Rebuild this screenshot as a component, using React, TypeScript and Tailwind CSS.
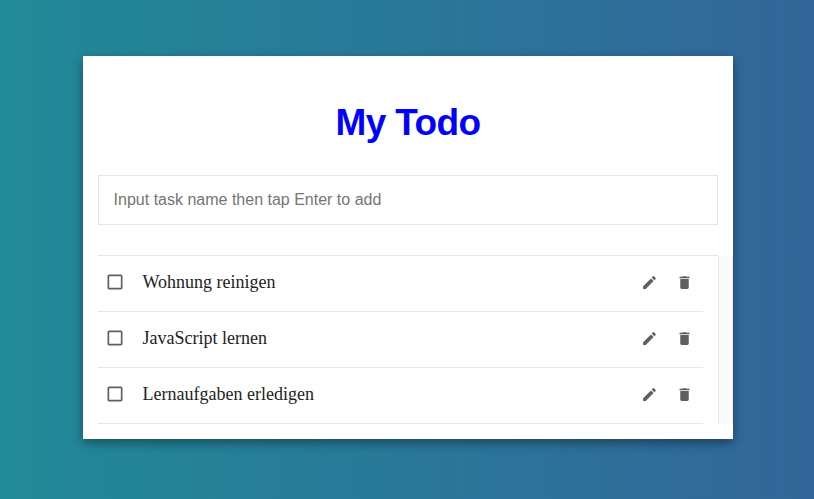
import React from "react";

const tasks = ["Wohnung reinigen", "JavaScript lernen", "Lernaufgaben erledigen"];

function Icon({ d, className }: { d: string; className: string }) {
  return (
    <svg viewBox="0 0 24 24" className={className} fill="currentColor" aria-hidden="true">
      <path d={d} />
    </svg>
  );
}

const box = "M19 5v14H5V5h14m0-2H5c-1.1 0-2 .9-2 2v14c0 1.1.9 2 2 2h14c1.1 0 2-.9 2-2V5c0-1.1-.9-2-2-2z";
const pencil = "M3 17.25V21h3.75L17.81 9.94l-3.75-3.75L3 17.25zM20.71 7.04c.39-.39.39-1.02 0-1.41l-2.34-2.34c-.39-.39-1.02-.39-1.41 0l-1.83 1.83 3.75 3.75 1.83-1.83z";
const trash = "M6 19c0 1.1.9 2 2 2h8c1.1 0 2-.9 2-2V7H6v12zM19 4h-3.5l-1-1h-5l-1 1H5v2h14V4z";

export default function App() {
  return (
    <main className="h-[499px] w-[814px] overflow-hidden bg-[linear-gradient(to_right,#218a98,#32669a)] pt-14 pl-[83px]">
      <section className="h-[383px] w-[650px] bg-white px-[15px] pt-[42px] shadow-[0_4px_10px_rgba(0,0,0,0.4)]">
        <h1 className="h-[77px] text-center font-['Liberation_Sans',Arial,sans-serif] text-[37px] leading-[50px] font-bold tracking-[-0.6px] text-[#0000ff]">
          My Todo
        </h1>
        <input
          placeholder="Input task name then tap Enter to add"
          className="block h-[50px] w-[620px] border border-[#e6e6e6] px-[14.6px] font-['Liberation_Sans',Arial,sans-serif] text-[16px] text-[#333] outline-none placeholder:text-[#757575]"
        />
        <div className="mt-[30px] w-[620px] border-t border-[#e6e6e6]" />
        <div className="flex w-[635px]">
          <ul className="w-[605px]">
            {tasks.map((task) => (
              <li key={task} className="flex h-14 items-center border-b border-[#e6e6e6] pr-[10px] pb-[3px] pl-[7px] text-[#5f5f5f]">
                <Icon d={box} className="size-5" />
                <span className="ml-[17.5px] flex-1 font-['Liberation_Serif','Times_New_Roman',serif] text-[18px] text-[#222]">{task}</span>
                <Icon d={pencil} className="mt-px size-[17px]" />
                <Icon d={trash} className="mt-px ml-[18px] size-[17px]" />
              </li>
            ))}
          </ul>
          <div className="ml-[15px] w-[15px] border-x border-l-[#e8e8e8] border-r-[#ededed] bg-[#fafafa]" />
        </div>
      </section>
    </main>
  );
}
